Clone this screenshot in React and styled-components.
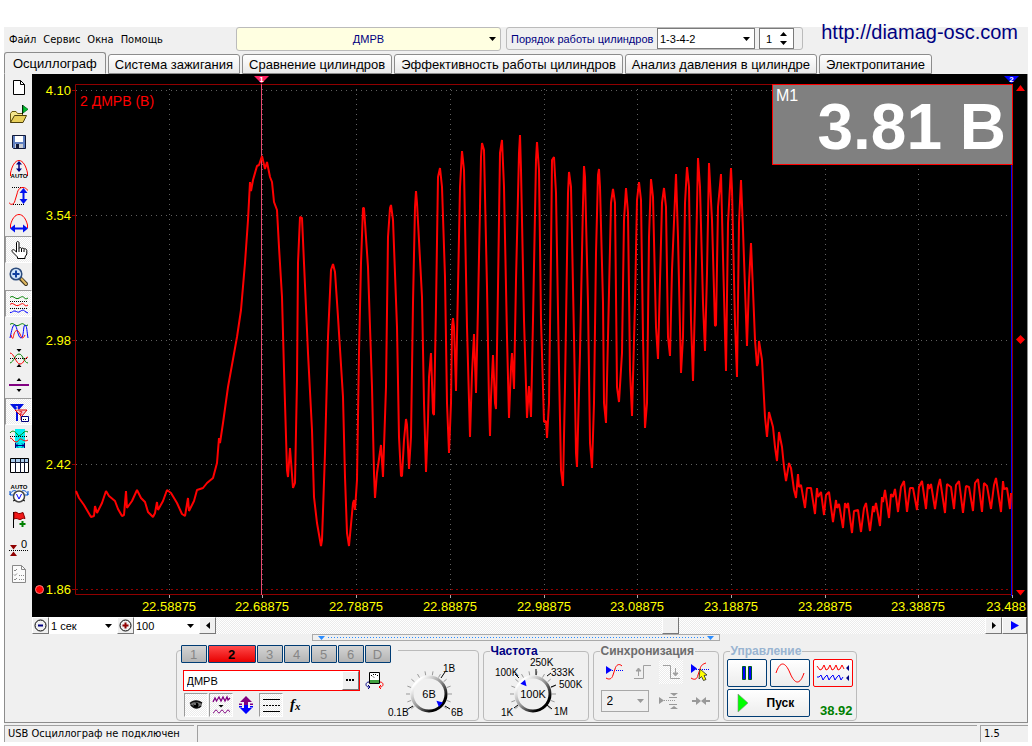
import React, { useState } from "react";
import styled, { createGlobalStyle, css } from "styled-components";

const SANS = `"Liberation Sans", Arial, sans-serif`;
const UI = `"DejaVu Sans Condensed", "DejaVu Sans", Tahoma, sans-serif`;

const TABS = [
  "Осциллограф",
  "Система зажигания",
  "Сравнение цилиндров",
  "Эффективность работы цилиндров",
  "Анализ давления в цилиндре",
  "Электропитание",
];

const GRID_X = [169, 262, 356, 450, 544, 637, 731, 825, 918, 1012];
const TIMES = ["22.58875", "22.68875", "22.78875", "22.88875", "22.98875", "23.08875", "23.18875", "23.28875", "23.38875", "23.488"];
const GRID_Y = [
  [90, "4.10"],
  [215, "3.54"],
  [340, "2.98"],
  [464, "2.42"],
  [589, "1.86"],
];

// samples of channel 2 (air flow sensor)
const WAVE =
  "76,491 79,498 84,505 91,517 94,516 95,506 97,513 102,503 106,491 109,496 115,501 118,509 122,516 124,515 126,491 127,508 132,501 137,490 141,498 145,502 148,512 153,517 155,513 157,502 158,510 163,501 167,490 171,493 177,503 182,514 185,516 188,498 189,511 194,501 197,490 203,488 207,483 213,478 217,463 219,438 220,443 223,423 228,387 237,337 241,310 245,263 248,220 250,182 251,191 253,180 257,166 259,165 262,156 265,169 267,162 270,177 272,182 274,202 277,210 279,247 282,297 284,370 287,470 288,477 290,448 293,488 295,483 297,380 298,263 300,217 302,218 304,263 308,353 312,430 314,497 317,523 321,546 322,540 325,453 328,337 331,270 333,264 335,272 338,317 343,397 345,477 347,533 349,546 353,503 354,500 355,510 357,480 359,353 361,263 363,208 364,208 368,267 372,387 374,473 375,498 377,473 381,445 383,477 386,387 388,237 390,208 391,205 393,220 397,327 399,437 401,476 402,476 404,440 406,419 407,425 409,469 411,437 413,303 415,207 416,191 417,203 422,297 424,403 426,472 428,420 429,377 431,353 433,413 434,415 436,307 438,177 440,168 442,187 445,277 447,403 449,453 451,403 452,327 453,318 454,327 456,391 457,337 460,187 462,151 464,170 467,327 470,437 472,373 474,334 476,393 478,307 481,157 482,143 484,150 487,287 489,403 490,436 491,397 493,355 495,403 496,409 498,287 500,153 502,140 504,187 507,337 509,418 511,367 512,353 514,389 516,280 519,153 520,135 521,170 524,320 527,418 529,386 531,417 533,320 536,160 537,142 539,170 541,320 544,422 546,421 547,438 549,403 551,253 552,160 554,157 556,193 559,370 561,470 563,486 565,387 568,193 569,172 571,187 574,337 576,453 577,467 580,353 583,203 584,166 585,177 588,303 590,443 592,468 594,403 596,253 598,175 599,169 600,187 603,303 604,403 606,423 608,337 611,203 613,189 615,203 617,387 619,402 622,353 624,220 626,188 628,213 630,370 632,416 635,303 637,200 639,182 641,200 643,337 645,428 647,403 649,237 651,179 653,197 656,327 658,359 659,320 662,203 664,188 666,207 668,337 670,356 672,270 676,174 678,237 681,373 683,337 685,203 687,167 689,187 691,320 693,381 695,303 698,158 700,187 703,303 705,351 707,273 709,163 712,220 715,326 716,325 718,207 721,174 723,257 726,371 728,223 731,168 732,190 735,323 737,377 739,223 741,180 743,230 747,346 749,283 751,243 753,290 755,340 757,366 758,363 759,341 762,360 765,417 767,437 769,412 773,427 775,447 777,461 779,432 782,447 784,467 786,481 789,463 791,468 794,490 796,498 798,474 799,487 801,485 805,508 807,488 811,488 815,514 817,488 818,497 821,492 824,515 826,495 829,492 833,522 836,500 837,508 839,504 843,528 845,503 847,508 848,503 852,533 854,511 858,510 861,532 864,508 866,503 870,531 873,506 874,512 876,503 880,526 882,497 883,502 885,490 889,518 891,494 893,497 895,489 898,512 901,487 904,481 907,512 910,488 913,488 917,510 919,487 922,481 926,509 928,484 929,489 931,484 935,509 938,487 940,479 945,513 947,484 951,487 954,509 956,485 959,481 963,513 966,486 969,487 973,511 975,483 978,479 982,512 984,483 987,486 991,509 994,485 996,478 1001,512 1003,481 1004,489 1007,488 1010,509 1011,493";

const GlobalStyle = createGlobalStyle`
  * { box-sizing: border-box; }
  body { margin: 0; background: #fff; font-family: ${UI}; font-size: 11px; color: #000; }
  button, input, select { font: inherit; color: inherit; margin: 0; }
`;

/* ---------- icons ---------- */

const Ico = ({ w = 20, h = 20, children }) => (
  <svg width={w} height={h} viewBox={`0 0 ${w} ${h}`} fill="none" aria-hidden="true">
    {children}
  </svg>
);

const Dots = ({ x1, x2, y, c = "#000" }) => (
  <path d={`M${x1} ${y}H${x2}`} stroke={c} strokeDasharray="1 1" shapeRendering="crispEdges" />
);

const icons = {
  "Новый": (
    <Ico>
      <path d="M4.500 2.500h7l4 4v10h-11z" fill="#fff" stroke="#000" />
      <path d="M11.500 2.500v4h4" stroke="#000" />
    </Ico>
  ),
  "Открыть": (
    <Ico>
      <path d="M1.500 17.500v-9l1.500-2h4l1.500 2h5v2" fill="#f4e68c" stroke="#6b5a10" />
      <path d="M1.500 17.500l4-7h12l-3.500 7z" fill="#e8cf5a" stroke="#4d400a" />
      <path d="M13.500 0v9" stroke="#000" />
      <path d="M14 .5l5 3.800-5 3.700z" fill="#00c030" stroke="#006818" strokeWidth=".8" />
    </Ico>
  ),
  "Сохранить": (
    <Ico>
      <path d="M3.500 3.500h13v13h-12l-1-1z" fill="#5f7fc0" stroke="#101838" />
      <path d="M6 4h8v6H6z" fill="#fff" />
      <path d="M6 12h8v4H6z" fill="#c8ccd4" />
      <path d="M7 12h3v4H7z" fill="#101838" />
    </Ico>
  ),
  "Авто": (
    <Ico>
      <path d="M1.500 17v-3C3 7 6 1.500 10 1.500S17 7 18.500 14v3" stroke="#f00" />
      <path d="M10 3v8" stroke="#000080" strokeWidth="1.500" />
      <path d="M7 5.500L10 2l3 3.500zM7 9.500l3 3.500 3-3.500z" fill="#000080" />
      <text x="10" y="19" textAnchor="middle" fontSize="6" fontWeight="bold" fontFamily={SANS} fill="#000">AUTO</text>
    </Ico>
  ),
  "Амплитуда": (
    <Ico>
      <Dots x1={3} x2={15} y={1.5} />
      <Dots x1={4} x2={15} y={18.5} />
      <path d="M0 16.500c1 2.500 5 3 6-2L8 8c1-5 3-6.500 6-6.500 2 0 3 1 5 3" stroke="#f00" />
      <path d="M14.500 4v12" stroke="#0010f0" strokeWidth="2" />
      <path d="M10.500 7l4-5 4 5zM10.500 13l4 5 4-5z" fill="#0010f0" />
    </Ico>
  ),
  "Период": (
    <Ico>
      <path d="M1.500 15v-3C3 6 6 1.500 10 1.500S17 6 18.500 12v3" stroke="#f00" />
      <path d="M4 15.500h12" stroke="#0010f0" strokeWidth="2" />
      <path d="M6 11.500l-5 4 5 4zM14 11.500l5 4-5 4z" fill="#0010f0" />
    </Ico>
  ),
  "Рука": (
    <Ico>
      <path
        d="M7.500 12V3c0-2 2.500-2 2.500 0v5.500c.5-1.500 2.500-1 2.500.2.500-1.200 2.500-.7 2.500.6.500-1 2.800-.6 2.800 1.200V14l-1.800 3v1.500H8.500V17L3.500 12c-1.500-2 .5-3 2-1.800z"
        fill="#fff"
        stroke="#000"
      />
      <path d="M10 8.500V12m2.500-3v3M15 9.500V12" stroke="#000" />
    </Ico>
  ),
  "Лупа": (
    <Ico>
      <path d="M12 12l5 5" stroke="#3c3420" strokeWidth="4" strokeLinecap="round" />
      <path d="M12.500 12l4.500 5" stroke="#e0b860" strokeWidth="2" strokeLinecap="round" />
      <circle cx="7" cy="7" r="5.800" fill="#cfe4fb" stroke="#2a4a7c" strokeWidth="1.500" />
      <path d="M7 3.500v7M3.500 7h7" stroke="#1040a0" strokeWidth="2" />
    </Ico>
  ),
  "Раздельно": (
    <Ico>
      <path d="M1 3.500c3-3 5 2 8 1s4-3 6-1 2 1.500 4 .5" stroke="#008000" />
      <Dots x1={1} x2={19} y={7.5} />
      <path d="M1 10.500c3-3 5 2 8 1s4-3 6-1 2 1.500 4 .5" stroke="#f00" />
      <Dots x1={1} x2={19} y={14.5} />
      <path d="M1 18.500c2 .5 3-2 5-1.500s3 2 5 .5 4-2 5 0l3 1.500" stroke="#00f" />
    </Ico>
  ),
  "Совместно": (
    <Ico>
      <path d="M1 3.500c3-3 5 2 8 1s4-3 6-1 2 1 4 .5" stroke="#008000" />
      <path d="M1 17C3 8 4 3 6 4s3 13 6 13 2-13 4-13 2 8 3 13" stroke="#00f" />
      <path d="M2 14c2 6 2 3 3-1s4-5 6 0 3 5 5 1" stroke="#f00" />
    </Ico>
  ),
  "Смещение": (
    <Ico>
      <path d="M1 5c4 0 6 11 10 11s4-6 8-7" stroke="#f00" />
      <path d="M1 15c4-1 5-9 9-9s5 9 9 9" stroke="#008000" />
      <Dots x1={1} x2={19} y={10.5} />
      <path d="M7.500 1h5L10 4zM7.500 19h5L10 16z" fill="#000" />
    </Ico>
  ),
  "Уровень": (
    <Ico>
      <path d="M0 9h20v2H0z" fill="#800080" />
      <path d="M7.500 6h5L10 3zM7.500 14h5L10 17z" fill="#000" />
    </Ico>
  ),
  "Маркеры": (
    <Ico>
      <path d="M1 2h14L9 9v10H7V9z" fill="#0010e0" />
      <path d="M6 8h12l-5 6v4h-1v-4z" fill="#f4d0d0" stroke="#e00000" />
      <text x="8" y="8" textAnchor="middle" fontSize="6" fontWeight="bold" fontFamily={SANS} fill="#fff">1</text>
      <text x="12" y="13" textAnchor="middle" fontSize="6" fontWeight="bold" fontFamily={SANS} fill="#e00000">2</text>
      <path d="M12.500 14.500h7v5h-7z" fill="#fff" stroke="#000080" />
      <Dots x1={14} x2={18} y={17.5} />
    </Ico>
  ),
  "Измерение": (
    <Ico>
      <path d="M6 0h10v19H6z" fill="#00f0f0" />
      <path d="M1 4c2-3 5-2 7 1s4 1 6-1 3-2 5-1" stroke="#008000" />
      <Dots x1={1} x2={19} y={7.5} />
      <path d="M1 9c3 0 3 4 6 4s3-4 5-3 4 3 7 1" stroke="#f00" />
      <path d="M7 16.500h8M6.500 14v5M15.500 14v5M9 14.500l-2 2 2 2M13 14.500l2 2-2 2" stroke="#000080" />
    </Ico>
  ),
  "Таблица": (
    <Ico>
      <path d="M1.500 2.500h18v14h-18z" fill="#fff" stroke="#000" />
      <path d="M2 3h17v3H2z" fill="#a8ccec" />
      <path d="M1.500 6.500h18M6.500 3v14M11.500 3v14M15.500 3v14" stroke="#101830" shapeRendering="crispEdges" />
    </Ico>
  ),
  "Авто развертка": (
    <Ico>
      <text x="10" y="6" textAnchor="middle" fontSize="6" fontWeight="bold" fontFamily={SANS} fill="#000">AUTO</text>
      <path d="M1 12c1-4 4-5 6-4M19 12c-1-4-4-5-6-4M1 8v4h3M19 8v4h-3" stroke="#0050d0" />
      <circle cx="10" cy="13.500" r="5.500" fill="#fff" stroke="#444" strokeWidth="1.500" />
      <path d="M7.500 11l2.500 5 2.500-5" stroke="#00f" />
      <path d="M4 18l2-1M16 18l-2-1" stroke="#000" />
    </Ico>
  ),
  "Флаг": (
    <Ico>
      <path d="M4.500 2v16" stroke="#000" />
      <path d="M5 2.500c3-1.500 4 2 6 1l3-1 2 6c-3-1-3 1-5 1s-3-2-6-.5z" fill="#f01818" stroke="#800" />
      <path d="M13.500 11v6M10.500 14h6" stroke="#008000" strokeWidth="2" />
    </Ico>
  ),
  "Ноль": (
    <Ico>
      <text x="15" y="11" textAnchor="middle" fontSize="11" fontFamily={SANS} fill="#000">0</text>
      <Dots x1={0} x2={20} y={13.5} />
      <path d="M1 8h7l-3.500 4.500zM1 19h7l-3.500-4.500z" fill="#900000" />
    </Ico>
  ),
  "Отчет": (
    <Ico>
      <path d="M3.500 1.500h9l4 4v13h-13z" fill="#fafafa" stroke="#888" />
      <path d="M12.500 1.500v4h4M5 6l1 1 2-2M5 10.500l1 1 2-2M5 15l1 1 2-2" stroke="#888" />
      <Dots x1={10} x2={15} y={11.5} c="#888" />
      <Dots x1={10} x2={15} y={15.5} c="#888" />
    </Ico>
  ),
};

const PRESSED = ["Рука", "Раздельно", "Маркеры"];

const DownArrow = ({ color = "#000" }) => (
  <svg width="7" height="4" viewBox="0 0 7 4" aria-hidden="true">
    <path d="M0 0h7L3.500 4z" fill={color} />
  </svg>
);

/* ---------- layout ---------- */

const checker = css`
  background: repeating-conic-gradient(#fff 0 25%, #ebebeb 0 50%) 0 0 / 2px 2px;
`;

const Page = styled.div`
  padding: 27px 4px 5px;
`;

const Window = styled.div`
  position: relative;
  background: #f0f0f0;
`;

const SiteLink = styled.a`
  position: absolute;
  top: -7px;
  right: 10px;
  font: 20px/24px ${SANS};
  color: #000080;
  text-decoration: none;
`;

const TopBar = styled.header`
  display: flex;
  align-items: flex-start;
  height: 25px;
`;

const Menu = styled.nav`
  display: flex;
  gap: 7px;
  width: 232px;
  padding: 6px 5px 0;

  button {
    padding: 0;
    border: 0;
    background: none;
    line-height: 14px;
  }
`;

const Combo = styled.div`
  display: grid;
  width: ${(p) => p.$w}px;
  height: ${(p) => p.$h}px;

  select,
  svg {
    grid-area: 1 / 1;
  }
  select {
    appearance: none;
    width: 100%;
    padding: 0 ${(p) => p.$pad || 2}px;
    border: ${(p) => (p.$line ? `1px solid ${p.$line}` : 0)};
    border-radius: ${(p) => p.$radius || 0}px;
    background: ${(p) => p.$bg || "#fff"};
    color: ${(p) => p.$color || "#000"};
    font: ${(p) => p.$font || 11}px ${SANS};
    text-align: ${(p) => p.$align || "left"};
    text-align-last: ${(p) => p.$align || "left"};
  }
  svg {
    place-self: center end;
    margin-right: ${(p) => p.$gap || 5}px;
    pointer-events: none;
  }
`;

const OrderBox = styled.div`
  display: flex;
  align-items: center;
  gap: 4px;
  height: 23px;
  margin-left: 5px;
  padding: 0 8px 0 4px;
  border: 1px solid #bbb;
  border-radius: 3px;
  font: 11px ${SANS};
  color: #000080;

  label {
    width: 142px;
    white-space: nowrap;
  }
`;

const Spinner = styled.div`
  display: flex;
  align-items: center;
  gap: 2px;
  width: 35px;
  height: 21px;
  border: 1px solid #7a7a7a;
  background: #fff;
  color: #000;

  input {
    width: 18px;
    padding: 0 0 0 6px;
    border: 0;
    background: none;
    outline: 0;
  }
`;

const TabList = styled.div`
  display: flex;
  align-items: flex-end;
  gap: 2px;
  height: 22px;
`;

const Tab = styled.button`
  height: ${(p) => (p.$active ? 22 : 20)}px;
  padding: 0 ${(p) => (p.$active ? 8 : 6)}px;
  border: 1px solid #8c8c8c;
  border-bottom-color: ${(p) => (p.$active ? "#f0f0f0" : "#8c8c8c")};
  border-radius: 3px 3px 0 0;
  background: ${(p) => (p.$active ? "#f0f0f0" : "linear-gradient(#fff, #e9e9e9)")};
  font: 13px ${SANS};
  white-space: nowrap;
`;

const Main = styled.main`
  border: solid #8c8c8c;
  border-width: 0 1px 1px;
`;

const Work = styled.div`
  display: grid;
  grid-template-columns: 27px minmax(0, 1fr);
`;

const Tools = styled.div`
  display: flex;
  flex-direction: column;
`;

const Tool = styled.button`
  display: grid;
  place-items: center;
  width: ${(p) => p.$size || 27}px;
  height: ${(p) => p.$size || 27}px;
  padding: 0;
  border: 1px solid transparent;
  background: none;
  ${(p) => (p.$pressed || p.$soft) && checker}
  ${(p) => p.$pressed && "border-color: #9a9a9a #fff #fff #9a9a9a;"}
`;

const Scope = styled.section`
  position: relative;
  background: #000;

  > svg {
    display: block;
    width: 100%;
    height: auto;
  }
`;

const Meter = styled.div`
  position: absolute;
  top: 10px;
  right: 14px;
  width: 241px;
  height: 81px;
  padding: 0 6px 0 3px;
  border: 1px solid #f00;
  background: #808080;
  color: #fff;
  font: 16px/22px ${SANS};

  strong {
    display: block;
    margin-top: -17px;
    font-size: 64px;
    line-height: 74px;
    text-align: right;
    white-space: nowrap;
  }
`;

const ScrollRow = styled.div`
  display: flex;
  height: 17px;
  margin-left: 27px;
`;

const Raised = styled.button`
  display: grid;
  place-items: center;
  flex: none;
  width: ${(p) => p.$w || 17}px;
  padding: 0;
  border: 1px solid;
  border-color: #fff #777 #777 #fff;
  background: #f0f0f0;
`;

const Scroll = styled.input`
  appearance: none;
  flex: 1;
  min-width: 0;
  height: 17px;
  ${checker}

  &::-webkit-slider-thumb {
    appearance: none;
    width: 17px;
    height: 17px;
    border: 1px solid;
    border-color: #fff #777 #777 #fff;
    background: #f0f0f0;
  }
`;

const Splitter = styled.div`
  display: flex;
  align-items: center;
  gap: 3px;
  width: 408px;
  height: 7px;
  margin: 0 auto;
  padding: 0 5px;
  border: 1px solid #aaa;

  i {
    flex: 1;
    height: 1px;
    background: repeating-linear-gradient(90deg, #2a8cff 0 1px, transparent 1px 3px);
  }
`;

const Controls = styled.div`
  display: flex;
  justify-content: center;
  align-items: stretch;
  gap: 4px;
  height: 81px;
  padding: 4px 0 1px;
`;

const ChannelBox = styled.section`
  display: flex;
  width: 303px;
  margin-top: 5px;
  border: 1px solid #bbb;
  border-radius: 4px;
`;

const ChannelSide = styled.div`
  width: 209px;
  padding-left: 4px;
`;

const Channels = styled.div`
  display: flex;
  gap: 1px;
  margin: -6px -12px 0 0;
  background: #f0f0f0;
`;

const Channel = styled.button`
  flex: ${(p) => (p.$active ? "0 0 48px" : "0 0 26px")};
  height: 18px;
  padding: 0;
  border: 1px solid #003c74;
  border-radius: 1px;
  background: ${(p) => (p.$active ? "linear-gradient(#ff4a4a, #e80000)" : "linear-gradient(#d4d4d4, #b4b4b4)")};
  color: ${(p) => (p.$active ? "#000" : "#868686")};
  font: ${(p) => (p.$active ? "bold 13px" : "13px")} ${SANS};
`;

const NameRow = styled.div`
  display: flex;
  align-items: center;
  gap: 5px;
  margin: 7px 0 2px 2px;
`;

const NameBox = styled.div`
  display: flex;
  flex: none;
  width: 177px;
  height: 21px;
  border: 1px solid #f00;
  background: #fff;

  input {
    flex: 1;
    min-width: 0;
    padding: 0 3px;
    border: 0;
    outline: 0;
    font: 11px ${SANS};
  }
`;

const ModeRow = styled.div`
  display: flex;
  gap: 1px;
  margin-left: 3px;
`;

const Group = styled.fieldset`
  display: block;
  width: ${(p) => p.$w}px;
  min-width: 0;
  margin: 0;
  padding: 0 3px;
  border: 1px solid #bbb;
  border-radius: 4px;

  legend {
    margin-left: 3px;
    padding: 0 1px;
    color: ${(p) => p.$color};
    font: bold 12px/12px ${SANS};
  }
`;

const Dial = styled.svg`
  display: block;
  flex: none;
  font-family: ${SANS};
  font-size: 10px;
`;

const SyncRow = styled.div`
  display: flex;
  align-items: center;
  gap: ${(p) => p.$gap || 5}px;
  margin: 3px 0 5px 4px;
`;

const Keys = styled.div`
  display: grid;
  grid-template-columns: 40px 40px 40px;
  grid-auto-rows: 28px;
  gap: 2px 3px;
  padding-top: 2px;
`;

const Key = styled.button`
  display: flex;
  align-items: center;
  justify-content: center;
  gap: 18px;
  grid-column: span ${(p) => p.$span || 1};
  padding: 0;
  border: 1px solid ${(p) => p.$line || "#003c74"};
  border-radius: 2px;
  background: linear-gradient(#fff, #ececec);
  font: bold 12px ${SANS};
`;

const PlayKey = styled(Key)`
  justify-content: flex-start;
  padding-left: 9px;
`;

const Rate = styled.output`
  align-self: end;
  color: #008000;
  font: bold 13px/13px ${SANS};
  text-align: right;
`;

const StatusBar = styled.footer`
  display: flex;
  gap: 3px;
  padding-top: 2px;
`;

const StatusCell = styled.div`
  flex: ${(p) => (p.$w ? `0 0 ${p.$w}px` : "1")};
  height: 17px;
  padding: 1px 3px 0;
  border: solid #a0a0a0;
  border-width: 1px 0 0 1px;
  line-height: 14px;
`;

/* ---------- parts ---------- */

const ScopeChart = () => (
  <svg viewBox="32 74 995 543" fontFamily={SANS} fontSize="13" role="img" aria-label="2 ДМРВ (В)">
    <g stroke="#606060" strokeDasharray="1 4" shapeRendering="crispEdges">
      {GRID_X.slice(0, -1).map((x) => (
        <path key={x} d={`M${x}.5 89V594`} />
      ))}
      {GRID_Y.slice(0, -1).map(([y]) => (
        <path key={y} d={`M76 ${y}.5H1012`} />
      ))}
    </g>
    <path d="M76 589.500H1012" stroke="#900000" strokeDasharray="2 3" />
    <path d="M75.500 84.500h937v510h-937z" fill="none" stroke="#900000" />
    <g fill="#ff0">
      {GRID_Y.map(([y, label]) => (
        <React.Fragment key={label}>
          <path d={`M72 ${y}.5h4`} stroke="#900000" />
          <text x="71" y={y + 5} textAnchor="end">{label}</text>
        </React.Fragment>
      ))}
      {GRID_X.map((x, i) => (
        <React.Fragment key={x}>
          <path d={`M${x}.5 595v3`} stroke="#aaa" />
          <text x={i === 9 ? 1026 : x} y="611" textAnchor={i === 9 ? "end" : "middle"}>
            {TIMES[i]}
          </text>
        </React.Fragment>
      ))}
    </g>
    <text x="80" y="106" fill="#f00" fontSize="14">2 ДМРВ (В)</text>
    <path d="M261.500 84v511" stroke="#e8486e" />
    <path d="M1011.500 84v512" stroke="#00f" />
    <polyline points={WAVE} fill="none" stroke="#f00" strokeWidth="2" strokeLinejoin="bevel" />
    <path d="M254 76h15l-7.500 7.500z" fill="#ff2060" />
    <path d="M1004 76h15l-7.500 7.500z" fill="#00f" />
    <g fill="#fff" fontSize="8" fontWeight="bold" textAnchor="middle">
      <text x="261.500" y="82">1</text>
      <text x="1011.500" y="82">2</text>
    </g>
    <path d="M1016 91h9l-4.500-6zM1016 590h9l-4.500 5.500zM1016 339.500l4.500-4.500 4.500 4.500-4.500 4.500z" fill="#f00" />
    <circle cx="39.500" cy="589.500" r="4" fill="#f00" stroke="#ff8080" />
  </svg>
);

// round knob with tick marks, dir is the pointer angle in degrees
const Knob = ({ cx, cy, dir, value, id }) => {
  const ticks = [];
  for (let a = 140; a <= 400; a += 20) {
    const r = (a * Math.PI) / 180;
    ticks.push(`M${cx + 19 * Math.cos(r)} ${cy + 19 * Math.sin(r)}L${cx + 23 * Math.cos(r)} ${cy + 23 * Math.sin(r)}`);
  }
  return (
    <>
      <defs>
        <linearGradient id={id} x1="0" y1="0" x2="1" y2="1">
          <stop offset=".15" stopColor="#fff" />
          <stop offset=".5" stopColor="#909090" />
          <stop offset=".8" stopColor="#000" />
        </linearGradient>
      </defs>
      <path d={ticks.join("")} stroke="#999" />
      <circle cx={cx} cy={cy} r="17" fill="#f0f0f0" stroke={`url(#${id})`} strokeWidth="3" />
      <path d="M10 0l6-3v6z" fill="#00f" transform={`translate(${cx} ${cy}) rotate(${dir})`} />
      <text x={cx} y={cy + 4} textAnchor="middle" fontSize="11">{value}</text>
    </>
  );
};

const ChannelPanel = () => {
  const [name, setName] = useState("ДМРВ");
  return (
    <ChannelBox>
      <ChannelSide>
        <Channels>
          {["1", "2", "3", "4", "5", "6", "D"].map((c) => (
            <Channel key={c} type="button" $active={c === "2"}>{c}</Channel>
          ))}
        </Channels>
        <NameRow>
          <NameBox>
            <input aria-label="Имя канала" value={name} onChange={(e) => setName(e.target.value)} />
            <Raised type="button" aria-label="Выбрать датчик">
              <Ico w={9} h={3}><path d="M0 0h2v2H0zM3 0h2v2H3zM6 0h2v2H6z" fill="#000" /></Ico>
            </Raised>
          </NameBox>
          <Ico w={19} h={18}>
            <path d="M4.500.5h10v11h-10z" fill="#fff" stroke="#000" />
            <path d="M5 8h9v3H5z" fill="#40a040" />
            <path d="M6 3.500h1M8 2.500h1M10 2.500h1M12 3.500h1M9 5.500l-1-1" stroke="#000" />
            <path d="M4 10c-4 0-4 5 0 5m-1-2l2 2-2 2" stroke="#000080" />
            <path d="M15 10c4 0 4 5 0 5m1-2l-2 2 2 2" stroke="#f00" />
          </Ico>
        </NameRow>
        <ModeRow>
          <Tool type="button" $size={24} $pressed aria-label="Показать">
            <Ico w={16} h={16}>
              <path d="M2 6c3-4 9-4 12 0v2c-3 5-8 5-12 0z" fill="#777" />
              <path d="M2 6.500c3-3 8-3 12-.5M3 8c3 3 7 4 10 1" stroke="#111" strokeWidth="1.500" />
              <circle cx="8" cy="8" r="2.500" fill="#000" />
              <circle cx="7" cy="7" r=".8" fill="#fff" />
            </Ico>
          </Tool>
          <Tool type="button" $size={24} $pressed aria-label="Фильтр">
            <Ico>
              <path d="M2 7l2-4 1.500 3L8 2l2 4 2-4 2 4 2-4 1 3 2-2" stroke="#800080" strokeWidth="1.300" />
              <path d="M7.500 10h5L10 12.500z" fill="#000" />
              <path d="M2 18c1.500 0 1.500-3 3-3s1.500 3 3 3 1.500-3 3-3 1.500 3 3 3 1.500-3 3-3 1 2 2 2" stroke="#800080" />
            </Ico>
          </Tool>
          <Tool type="button" $size={24} aria-label="Инверсия">
            <Ico>
              <path d="M10 1l6 6h-4v3H8V7H4zM3 8.500h3v1.500H3zM14 8.500h3V10h-3z" fill="#800080" />
              <path d="M10 19l6-6h-4v-3H8v3H4zM3 11h3v1.500H3zM14 11h3v1.500h-3z" fill="#00f" />
            </Ico>
          </Tool>
          <Tool type="button" $size={24} $pressed aria-label="Связь">
            <Ico>
              <path d="M2 4.500h17M2 16.500h17" stroke="#000" />
              <path d="M2 10.500h17" stroke="#000" strokeDasharray="2 1" />
            </Ico>
          </Tool>
          <Tool type="button" $size={24} aria-label="Функция">
            <Ico>
              <text x="4" y="14" fontFamily='"Liberation Serif", serif' fontStyle="italic" fontWeight="bold" fontSize="15" fill="#000">f</text>
              <text x="9" y="15" fontFamily='"Liberation Serif", serif' fontStyle="italic" fontWeight="bold" fontSize="11" fill="#000">x</text>
            </Ico>
          </Tool>
        </ModeRow>
      </ChannelSide>
      <Dial width="82" height="68" viewBox="386 651 82 68">
        <Knob id="rimV" cx={429} cy={694} dir={42} value="6В" />
        <path d="M441 678l4-6M413 706l-5 3M445 706l5 3" stroke="#000" />
        <text x="443" y="672">1В</text>
        <text x="388" y="716">0.1В</text>
        <text x="451" y="716">6В</text>
      </Dial>
    </ChannelBox>
  );
};

const FreqPanel = () => (
  <Group $w={106} $color="#000080">
    <legend>Частота</legend>
    <Dial width="98" height="62" viewBox="487 657 98 62">
      <Knob id="rimF" cx={533} cy={694} dir={230} value="100K" />
      <path d="M536 675v-6M519 678l-4-4M547 676l4-3M551 687l5-2M518 705l-4 3M547 705l5 4" stroke="#000" />
      <text x="495" y="676">100K</text>
      <text x="530" y="666">250K</text>
      <text x="551" y="676">333K</text>
      <text x="559" y="688">500K</text>
      <text x="501" y="716">1K</text>
      <text x="554" y="715">1M</text>
    </Dial>
  </Group>
);

const SyncPanel = () => (
  <Group $w={126} $color="#6d6d6d">
    <legend>Синхронизация</legend>
    <SyncRow>
      <Tool type="button" $size={24} aria-label="Синхронизация">
        <Ico>
          <path d="M3 4l6 4-6 4z" fill="#00f" />
          <Dots x1={3} x2={20} y={8.5} c="#00f" />
          <path d="M3 16c3 2 6 1 7-3l2-6c1-4 4-6 7-3" stroke="#f00" />
        </Ico>
      </Tool>
      <Tool type="button" $size={24} aria-label="Фронт">
        <Ico>
          <path d="M2 16.500h9.500v-13H19" stroke="#a0a0a0" />
          <path d="M6.500 7v7M4 9l2.500-3L9 9z" stroke="#a0a0a0" fill="#a0a0a0" />
        </Ico>
      </Tool>
      <Tool type="button" $size={24} $soft aria-label="Спад">
        <Ico>
          <path d="M2 3.500h7.500v13H19" stroke="#a0a0a0" />
          <path d="M14.500 6v6M12 11l2.500 3 2.500-3z" stroke="#a0a0a0" fill="#a0a0a0" />
        </Ico>
      </Tool>
      <Tool type="button" $size={24} aria-label="Уровень синхронизации">
        <Ico>
          <path d="M1 2l6 4.500L1 11z" fill="#00f" />
          <Dots x1={2} x2={20} y={7} c="#00f" />
          <path d="M1 16c3 2 6 2 7-3l2-6c1-4 3-5 6-6" stroke="#f00" />
          <path d="M10 7l7 6-3 .5 2 4-2.500 1-2-4L9 17z" fill="#ff0" stroke="#222" strokeWidth=".8" />
        </Ico>
      </Tool>
    </SyncRow>
    <SyncRow $gap={8}>
      <Combo $w={48} $h={22} $line="#a8a8a8" $bg="#f0f0f0" $pad={5} $font={12}>
        <select aria-label="Канал синхронизации" defaultValue="2"><option>2</option></select>
        <DownArrow color="#999" />
      </Combo>
      <Tool type="button" $size={24} aria-label="Порог">
        <Ico>
          <path d="M0 6l5 3.500L0 13zM11 2h8l-4 3zM11 18h8l-4-3z" fill="#999" />
          <path d="M10 6.500h8M10 13.500h8" stroke="#999" />
          <Dots x1={5} x2={16} y={9.5} c="#999" />
        </Ico>
      </Tool>
      <Tool type="button" $size={24} aria-label="Центр">
        <Ico>
          <path d="M1 9h4V6l5 4-5 4v-3H1zM19 9h-4V6l-5 4 5 4v-3h4z" fill="#999" />
        </Ico>
      </Tool>
    </SyncRow>
  </Group>
);

const RunPanel = () => (
  <Group $w={134} $color="#99b4d1">
    <legend>Управление</legend>
    <Keys>
      <Key type="button" aria-label="Пауза">
        <Ico w={12} h={16}><path d="M1.500 1.500h3v13h-3zM7.500 1.500h3v13h-3z" fill="#00f" stroke="#006020" /></Ico>
      </Key>
      <Key type="button" aria-label="Один кадр">
        <Ico w={30} h={20}><path d="M1 10C5-2 10-2 15 10s10 12 14 0" stroke="#f00" /></Ico>
      </Key>
      <Key type="button" $line="#f00" aria-label="Непрерывно">
        <Ico w={34} h={20}>
          <path d="M1 3l3 4 2-1 2-4 2 5 2-1 2-4 2 5 2-1 2-4 2 5 2-1 2-4 2 4" stroke="#f00" />
          <path d="M1 14h2l2-2 2 5 2-3 2-2 2 5 2-3 2-2 2 5 2-3 2-2 2 5 2-3" stroke="#00f" />
          <path d="M33 2v6l-3-3zM33 12v6l-3-3z" fill="#000080" />
        </Ico>
      </Key>
      <PlayKey type="button" $span={2}>
        <Ico w={12} h={20}><path d="M1 1l10 9-10 9z" fill="#0f0" stroke="#888" strokeWidth=".6" /></Ico>
        Пуск
      </PlayKey>
      <Rate>38.92</Rate>
    </Keys>
  </Group>
);

const App = () => {
  const [tab, setTab] = useState(TABS[0]);
  const [pos, setPos] = useState(593);
  const [count, setCount] = useState("1");

  return (
    <Page>
      <GlobalStyle />
      <Window>
        <TopBar>
          <Menu>
            {["Файл", "Сервис", "Окна", "Помощь"].map((m) => (
              <button key={m} type="button">{m}</button>
            ))}
          </Menu>
          <Combo $w={265} $h={24} $line="#bbb" $radius={3} $bg="#ffffe1" $color="#000080" $align="center" $pad={2}>
            <select aria-label="Датчик" defaultValue="ДМРВ"><option>ДМРВ</option></select>
            <DownArrow />
          </Combo>
          <OrderBox>
            <label htmlFor="order">Порядок работы цилиндров</label>
            <Combo $w={98} $h={21} $line="#7a7a7a">
              <select id="order" defaultValue="1-3-4-2"><option>1-3-4-2</option></select>
              <DownArrow />
            </Combo>
            <Spinner>
              <input aria-label="Цилиндр" value={count} onChange={(e) => setCount(e.target.value)} />
              <svg width="7" height="13" viewBox="0 0 7 13" aria-hidden="true">
                <path d="M0 4h7L3.500 0zM0 9h7l-3.500 4z" />
              </svg>
            </Spinner>
          </OrderBox>
          <SiteLink href="http://diamag-osc.com">http://diamag-osc.com</SiteLink>
        </TopBar>
        <TabList role="tablist">
          {TABS.map((t) => (
            <Tab key={t} type="button" role="tab" aria-selected={t === tab} $active={t === tab} onClick={() => setTab(t)}>
              {t}
            </Tab>
          ))}
        </TabList>
        <Main>
          <Work>
            <Tools>
              {Object.keys(icons).map((name) => (
                <Tool key={name} type="button" aria-label={name} $pressed={PRESSED.includes(name)}>
                  {icons[name]}
                </Tool>
              ))}
            </Tools>
            <Scope>
              <ScopeChart />
              <Meter>
                M1
                <strong>3.81 В</strong>
              </Meter>
            </Scope>
          </Work>
          <ScrollRow>
            <Raised type="button" aria-label="Уменьшить">
              <Ico w={13} h={13}>
                <circle cx="6.500" cy="6.500" r="5.500" stroke="#000" />
                <path d="M4 6.500h5" stroke="#000080" strokeWidth="2" />
              </Ico>
            </Raised>
            <Combo $w={68} $h={17}>
              <select aria-label="Развертка" defaultValue="1 сек"><option>1 сек</option></select>
              <DownArrow />
            </Combo>
            <Raised type="button" aria-label="Увеличить">
              <Ico w={13} h={13}>
                <circle cx="6.500" cy="6.500" r="5.500" stroke="#000" />
                <path d="M3.500 6.500h6M6.500 3.500v6" stroke="#900000" strokeWidth="2" />
              </Ico>
            </Raised>
            <Combo $w={65} $h={17}>
              <select aria-label="Масштаб" defaultValue="100"><option>100</option></select>
              <DownArrow />
            </Combo>
            <Raised type="button" aria-label="Влево">
              <Ico w={4} h={7}><path d="M4 0v7L0 3.500z" fill="#000" /></Ico>
            </Raised>
            <Scroll type="range" min="0" max="1000" aria-label="Время" value={pos} onChange={(e) => setPos(+e.target.value)} />
            <Raised type="button" aria-label="Вправо">
              <Ico w={4} h={7}><path d="M0 0v7l4-3.500z" fill="#000" /></Ico>
            </Raised>
            <Raised type="button" $w={25} aria-label="Воспроизвести">
              <Ico w={8} h={9}><path d="M0 0v9l8-4.500z" fill="#00f" /></Ico>
            </Raised>
          </ScrollRow>
          <Splitter>
            <DownArrow color="#2a8cff" />
            <i />
            <DownArrow color="#2a8cff" />
          </Splitter>
          <Controls>
            <ChannelPanel />
            <FreqPanel />
            <SyncPanel />
            <RunPanel />
          </Controls>
        </Main>
        <StatusBar>
          <StatusCell $w={190}>USB Осциллограф не подключен</StatusCell>
          <StatusCell />
          <StatusCell $w={48}>1.5</StatusCell>
        </StatusBar>
      </Window>
    </Page>
  );
};

export default App;
